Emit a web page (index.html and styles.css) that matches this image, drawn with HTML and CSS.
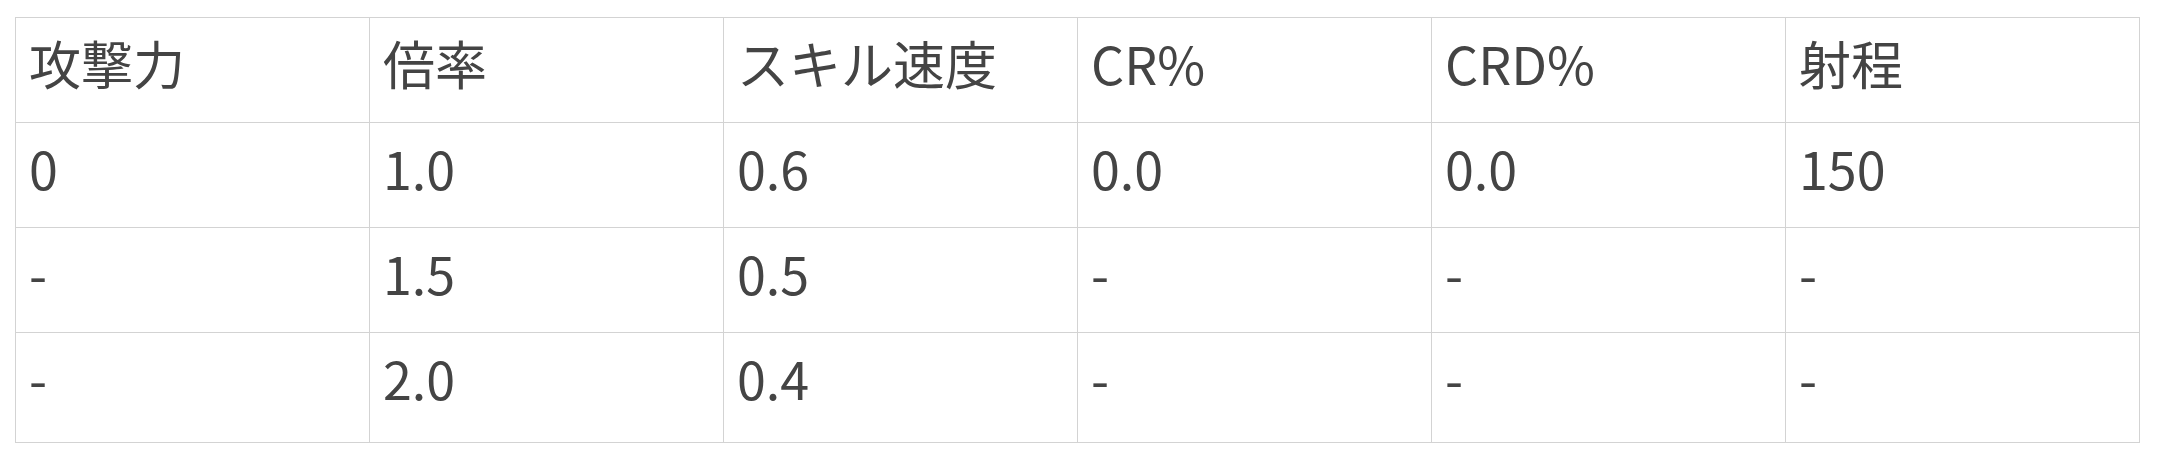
FILE: index.html
```html
<!DOCTYPE html>
<html lang="ja">
<head>
<meta charset="utf-8">
<title>Table</title>
<link rel="stylesheet" href="styles.css">
</head>
<body>
<table class="stats">
  <colgroup>
    <col class="col"><col class="col"><col class="col"><col class="col"><col class="col"><col class="col">
  </colgroup>
  <tbody>
    <tr>
      <td>攻撃力</td><td>倍率</td><td>スキル速度</td><td>CR%</td><td>CRD%</td><td>射程</td>
    </tr>
    <tr>
      <td>0</td><td>1.0</td><td>0.6</td><td>0.0</td><td>0.0</td><td>150</td>
    </tr>
    <tr>
      <td>-</td><td>1.5</td><td>0.5</td><td>-</td><td>-</td><td>-</td>
    </tr>
    <tr class="last">
      <td>-</td><td>2.0</td><td>0.4</td><td>-</td><td>-</td><td>-</td>
    </tr>
  </tbody>
</table>
</body>
</html>
```

FILE: styles.css
```css
html, body {
  margin: 0;
  padding: 0;
  background: #ffffff;
}

body {
  padding: 17px 0 0 15px;
  font-family: "Noto Sans CJK JP", "Noto Sans", sans-serif;
  color: #444444;
}

.stats {
  border-collapse: collapse;
  table-layout: fixed;
  width: 2125px;
}

.stats .col {
  width: 354px;
}

.stats td {
  border: 1px solid #d3d3d3;
  padding: 6px 13px 20px 13px;
  font-size: 52px;
  line-height: 78px;
  vertical-align: top;
  white-space: nowrap;
  text-align: left;
}

.stats .last td {
  padding-bottom: 25px;
}
```
